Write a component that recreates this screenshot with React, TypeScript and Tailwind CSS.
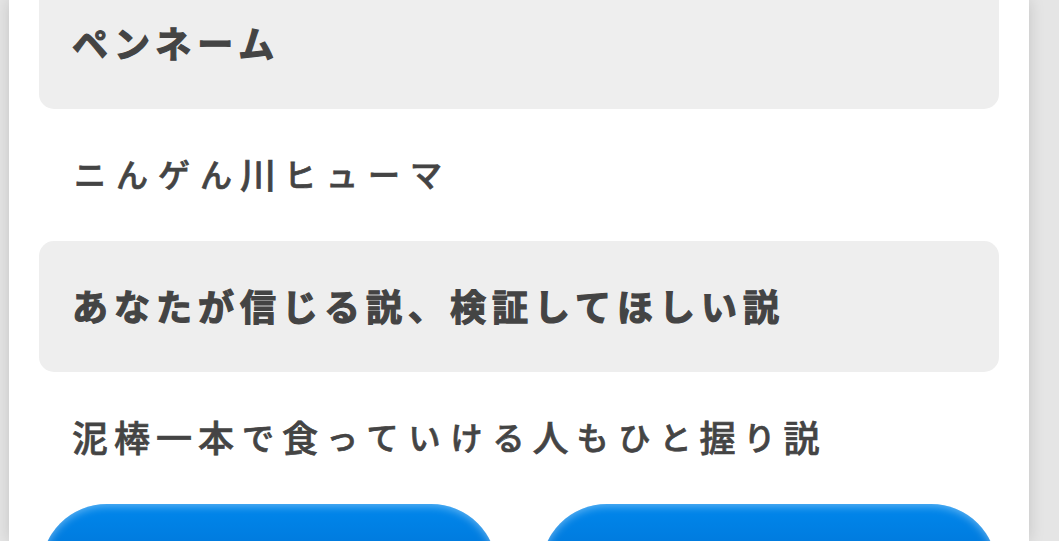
import React from "react"

const entries = [
  { id: 0, label: "ペンネーム", value: "ニんゲん川ヒューマ" },
  { id: 1, label: "あなたが信じる説、検証してほしい説", value: "泥棒一本で食っていける人もひと握り説" },
]

// Kana is set slightly smaller than kanji, on the same 42px pitch
const MixedText = ({ text }: { text: string }) => {
  const runs = text.split(/([ぁ-んァ-ヶー]+)/).filter(Boolean)

  return (
    <>
      {runs.map((run, index) =>
        /^[ぁ-んァ-ヶー]/.test(run) ? (
          <span key={index} className="mr-[-2px] ml-[2px] align-[2px] text-[32px] leading-none tracking-[10px]">
            {run}
          </span>
        ) : (
          <span key={index}>{run}</span>
        )
      )}
    </>
  )
}

const App = () => {
  return (
    <div className="h-[541px] w-[1059px] overflow-hidden bg-[#e5e5e5] pl-[9px] text-[#444444]">
      <main className="flow-root h-full w-[1020px] bg-white px-[30px] shadow-[0_0_15px_rgba(0,0,0,0.15)]">
        {/* The first label is scrolled partly out of view */}
        <dl className="-mt-[22px] flex flex-col font-['Noto_Sans_CJK_JP',sans-serif] text-[36px] leading-[128px] tracking-[6px] whitespace-nowrap [paint-order:stroke_fill] [stroke-linejoin:round]">
          {entries.map((entry) => (
            <React.Fragment key={entry.id}>
              <dt className="h-[131px] rounded-[15px] bg-[#eeeeee] pl-[33px] font-bold [-webkit-text-stroke:1.2px_#444444]">
                {entry.label}
              </dt>
              <dd className="h-[132px] pl-[33px] font-medium [-webkit-text-stroke:0.7px_#444444]">
                <MixedText text={entry.value} />
              </dd>
            </React.Fragment>
          ))}
        </dl>

        <div className="flex gap-[44px] pl-[2px]">
          <button
            type="button"
            aria-label="戻る"
            className="h-[132px] w-[456px] shrink-0 rounded-full bg-linear-to-b from-[#0087ec] to-[#0060bf] shadow-[inset_0_2px_8px_rgba(255,255,255,0.4)]"
          />
          <button
            type="button"
            aria-label="送信"
            className="h-[132px] w-[456px] shrink-0 rounded-full bg-linear-to-b from-[#0087ec] to-[#0060bf] shadow-[inset_0_2px_8px_rgba(255,255,255,0.4)]"
          />
        </div>
      </main>
    </div>
  )
}

export default App
